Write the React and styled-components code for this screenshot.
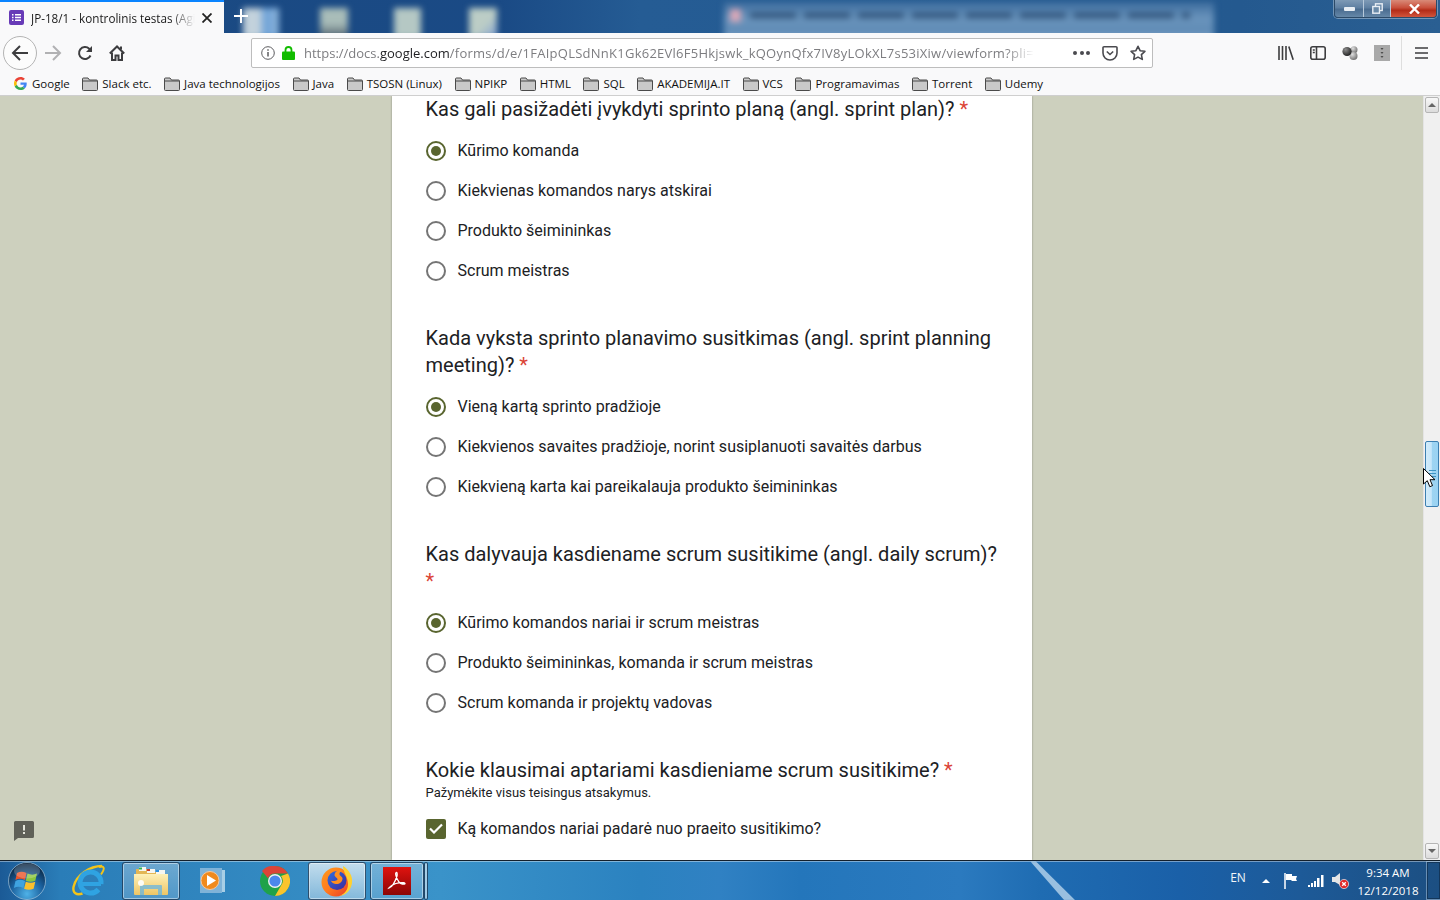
import React from "react";
import styled, { createGlobalStyle } from "styled-components";

const GlobalStyle = createGlobalStyle`
  html, body {
    margin: 0;
    padding: 0;
    height: 100%;
    overflow: hidden;
  }
  * {
    box-sizing: border-box;
  }
`;

const UI_FONT = `"Open Sans", "Noto Sans", sans-serif`;

const questions = [
  {
    title: "Kas gali pasižadėti įvykdyti sprinto planą (angl. sprint plan)?",
    options: ["Kūrimo komanda", "Kiekvienas komandos narys atskirai", "Produkto šeimininkas", "Scrum meistras"],
  },
  {
    title: "Kada vyksta sprinto planavimo susitkimas (angl. sprint planning meeting)?",
    options: [
      "Vieną kartą sprinto pradžioje",
      "Kiekvienos savaites pradžioje, norint susiplanuoti savaitės darbus",
      "Kiekvieną karta kai pareikalauja produkto šeimininkas",
    ],
  },
  {
    title: "Kas dalyvauja kasdiename scrum susitikime (angl. daily scrum)?",
    options: [
      "Kūrimo komandos nariai ir scrum meistras",
      "Produkto šeimininkas, komanda ir scrum meistras",
      "Scrum komanda ir projektų vadovas",
    ],
  },
];

const bookmarks = [
  "Slack etc.",
  "Java technologijos",
  "Java",
  "TSOSN (Linux)",
  "NPIKP",
  "HTML",
  "SQL",
  "AKADEMIJA.IT",
  "VCS",
  "Programavimas",
  "Torrent",
  "Udemy",
];

// ---- icons ----
const GoogleIcon = () => (
  <svg width="13" height="13" viewBox="0 0 48 48">
    <path fill="#EA4335" d="M24 9.5c3.5 0 6.7 1.2 9.2 3.6l6.9-6.9C35.9 2.4 30.5 0 24 0 14.6 0 6.5 5.4 2.6 13.2l8 6.2C12.5 13.6 17.8 9.5 24 9.5z" />
    <path fill="#4285F4" d="M46.9 24.5c0-1.6-.1-3.1-.4-4.5H24v9h12.9c-.6 3-2.2 5.5-4.8 7.2l7.7 6c4.5-4.2 7.1-10.3 7.1-17.7z" />
    <path fill="#FBBC05" d="M10.5 28.6c-.5-1.4-.8-3-.8-4.6s.3-3.2.8-4.6l-8-6.2C.9 16.5 0 20.1 0 24s.9 7.5 2.6 10.8l7.9-6.2z" />
    <path fill="#34A853" d="M24 48c6.5 0 11.9-2.1 15.9-5.8l-7.7-6c-2.2 1.5-4.9 2.3-8.2 2.3-6.2 0-11.5-4.1-13.4-9.9l-8 6.2C6.5 42.6 14.6 48 24 48z" />
  </svg>
);

const FolderIcon = () => (
  <svg width="16" height="14" viewBox="0 0 16 14">
    <path d="M.5 12.5V2A1 1 0 0 1 1.5 1H6l1.500 2h7a1 1 0 0 1 1 1v8.500a1 1 0 0 1-1 1h-13a1 1 0 0 1-1-1z" fill="#c9c9c9" stroke="#4a4a4a" />
    <path d="M1 4h14" stroke="#4a4a4a" />
  </svg>
);

const BackIcon = () => (
  <svg width="18" height="18" viewBox="0 0 18 18" fill="none" stroke="#3d3d3f" strokeWidth="2">
    <path d="M17 9H2M9 2 2 9l7 7" />
  </svg>
);

const ForwardIcon = () => (
  <svg width="18" height="18" viewBox="0 0 18 18" fill="none" stroke="#b1b1b3" strokeWidth="2">
    <path d="M1 9h15M9 2l7 7-7 7" />
  </svg>
);

const ReloadIcon = () => (
  <svg width="16" height="16" viewBox="0 0 16 16" fill="none" stroke="#3d3d3f" strokeWidth="2">
    <path d="M13.5 10.5A6 6 0 1 1 12.2 3.7L14.5 6" />
    <path d="M15 1v6H9" fill="#3d3d3f" stroke="none" />
  </svg>
);

const HomeIcon = () => (
  <svg width="16" height="16" viewBox="0 0 16 16" fill="none" stroke="#3d3d3f" strokeWidth="2">
    <path d="M.8 8.500 8 1.500l7.200 7" />
    <path d="M3 7.500V15h3.500v-4.500h3V15H13V7.500" />
    <path d="M12 1.500v3" />
  </svg>
);

const InfoIcon = () => (
  <svg width="14" height="14" viewBox="0 0 14 14" fill="none" stroke="#5c5c5f">
    <circle cx="7" cy="7" r="6.3" />
    <path d="M7 6v4.500M7 3.200v1.600" strokeWidth="1.5" />
  </svg>
);

const LockIcon = () => (
  <svg width="13" height="14" viewBox="0 0 13 14">
    <path d="M3.5 6V4a3 3 0 0 1 6 0v2" fill="none" stroke="#12bc00" strokeWidth="1.8" />
    <rect y="5.5" width="13" height="8.5" rx="1" fill="#12bc00" />
  </svg>
);

const PocketIcon = () => (
  <svg width="16" height="15" viewBox="0 0 16 15" fill="none" stroke="#4a4a4f" strokeWidth="1.6">
    <path d="M1 1.800A1 1 0 0 1 2 .8h12a1 1 0 0 1 1 1V7a7 7 0 0 1-14 0z" />
    <path d="m4.800 5.500 3.200 3 3.200-3" />
  </svg>
);

const StarIcon = () => (
  <svg width="16" height="16" viewBox="0 0 16 16" fill="none" stroke="#4a4a4f" strokeWidth="1.6" strokeLinejoin="round">
    <path d="m8 1.300 2.100 4.400 4.800.6-3.500 3.300.9 4.800L8 12.100l-4.300 2.300.9-4.800L1.100 6.300l4.800-.6z" />
  </svg>
);

const LibraryIcon = () => (
  <svg width="16" height="14" viewBox="0 0 16 14" fill="none" stroke="#3d3d3f" strokeWidth="1.6">
    <path d="M1 0v14M4.500 0v14M8 0v14M10.800.5l4.400 13.300" />
  </svg>
);

const SidebarIcon = () => (
  <svg width="16" height="14" viewBox="0 0 16 14" fill="none" stroke="#3d3d3f" strokeWidth="1.6">
    <rect x=".8" y=".8" width="14.4" height="12.4" rx="2" />
    <path d="M6.500 1v12M2.800 4h2M2.800 6.500h2" />
  </svg>
);

const BallsIcon = () => (
  <svg width="16" height="14" viewBox="0 0 16 14">
    <defs>
      <radialGradient id="ballDark" cx="35%" cy="30%" r="75%">
        <stop offset="0" stopColor="#8c8c8c" />
        <stop offset="1" stopColor="#1e1e1e" />
      </radialGradient>
      <radialGradient id="ballLight" cx="35%" cy="30%" r="75%">
        <stop offset="0" stopColor="#e0e0e0" />
        <stop offset="1" stopColor="#6e6e6e" />
      </radialGradient>
    </defs>
    <circle cx="12" cy="3.8" r="3.5" fill="url(#ballLight)" />
    <circle cx="11.5" cy="10" r="4" fill="url(#ballLight)" />
    <circle cx="5" cy="5.5" r="4.6" fill="url(#ballDark)" />
  </svg>
);

const ExtIcon = () => (
  <svg width="16" height="16" viewBox="0 0 16 16">
    <rect width="16" height="16" fill="#a9a9a9" />
    <path d="M6.500 3h3L8 5zM6.500 7h3L8 9zM6.500 11h3L8 13z" fill="#4d4d4d" />
  </svg>
);

const MenuIcon = () => (
  <svg width="13" height="12" viewBox="0 0 13 12" stroke="#3d3d3f" strokeWidth="1.7">
    <path d="M0 1h13M0 6h13M0 11h13" />
  </svg>
);

const FeedbackIcon = () => (
  <svg width="20" height="20" viewBox="0 0 20 20">
    <path d="M1.500 0h17A1.500 1.500 0 0 1 20 1.500v14a1.500 1.500 0 0 1-1.500 1.500H4l-4 3V1.500A1.500 1.500 0 0 1 1.500 0z" fill="#5f6058" />
    <path d="M9 4h2v5.500H9zM9 11h2v2H9z" fill="#e4e5dc" />
  </svg>
);

const OrbIcon = () => (
  <svg width="38" height="38" viewBox="0 0 38 38">
    <defs>
      <radialGradient id="orbBg" cx="50%" cy="85%" r="80%">
        <stop offset="0" stopColor="#4fb2e8" />
        <stop offset=".55" stopColor="#1a5f9c" />
        <stop offset="1" stopColor="#0a2540" />
      </radialGradient>
    </defs>
    <circle cx="19" cy="19" r="18.5" fill="url(#orbBg)" stroke="#b9d2e4" strokeOpacity=".6" />
    <path d="M9 11c3-1.700 6-1.700 9.500 0l-1.600 7c-3.500-1.600-6.300-1.600-9.500 0z" fill="#e8552b" />
    <path d="M19.500 11.500c3.200 1.500 6.300 1.500 9.500 0l-1.700 7.200c-3.200 1.300-6.300 1.300-9.500 0z" fill="#8cc63f" />
    <path d="M7.500 19c3.200-1.600 6-1.600 9.500 0l-1.600 7c-3.500-1.600-6.300-1.600-9.500 0z" fill="#3fa3e0" />
    <path d="M17.800 19.800c3.200 1.300 6.300 1.300 9.500 0l-1.700 7c-3.200 1.300-6.300 1.300-9.500 0z" fill="#fbc02d" />
    <ellipse cx="19" cy="9" rx="13" ry="7.5" fill="#fff" fillOpacity=".2" />
  </svg>
);

const IeIcon = () => (
  <svg width="36" height="36" viewBox="0 0 36 36" fill="none">
    <path d="M32 3C20 3 6 12 3.500 24c-1 6 3 8.500 9 6.500" stroke="#f3c419" strokeWidth="2.4" />
    <path d="M29 4c4-1.500 5.500.500 4.500 3-.5 1.500-1.500 3-2.500 4.500" stroke="#f3c419" strokeWidth="2" />
    <path d="M31 21H11" stroke="#2fa3e2" strokeWidth="4" />
    <path d="M28.500 26.500A10.500 10.500 0 1 1 31 21" stroke="#2fa3e2" strokeWidth="5" />
  </svg>
);

const ExplorerIcon = () => (
  <svg width="34" height="30" viewBox="0 0 34 30">
    <defs>
      <linearGradient id="folderFace" x1="0" y1="0" x2="0" y2="1">
        <stop offset="0" stopColor="#fdf0b8" />
        <stop offset="1" stopColor="#eec565" />
      </linearGradient>
    </defs>
    <path d="M2 3h12l2 3h15v8H2z" fill="#e3b655" />
    <path d="M5 1h7v4H5z" fill="#f6f6f0" />
    <rect x="5" y="1.5" width="3" height="2" fill="#2fb24a" />
    <path d="M13 3h8v4h-8z" fill="#f6f6f0" />
    <rect x="13" y="3" width="3" height="2" fill="#c93a2c" />
    <path d="M22 4h9v4h-9z" fill="#f6f6f0" />
    <rect x="22" y="4" width="3" height="2" fill="#2d8fe0" />
    <path d="M0 8h34v20a1 1 0 0 1-1 1H1a1 1 0 0 1-1-1z" fill="url(#folderFace)" />
    <path d="M6 29v-9a1 1 0 0 1 1-1h20a1 1 0 0 1 1 1v9h-4v-6H10v6z" fill="#6fb6dc" fillOpacity=".8" />
    <circle cx="7" cy="17" r="3" fill="#fff" fillOpacity=".9" />
  </svg>
);

const MediaIcon = () => (
  <svg width="30" height="28" viewBox="0 0 30 28">
    <rect x="9" y="3" width="20" height="22" fill="#a8cfe6" />
    <rect x="4" y="1" width="22" height="25" fill="#7fb3d8" />
    <circle cx="14" cy="13.5" r="9" fill="#f08a1d" stroke="#f7c79a" />
    <path d="m11 8 9 5.500-9 5.500z" fill="#fff" />
  </svg>
);

const ChromeIcon = () => (
  <svg width="30" height="30" viewBox="0 0 30 30">
    <circle cx="15" cy="15" r="15" fill="#1fa24a" />
    <path d="M15 0a15 15 0 0 1 13 7.500H15a7.500 7.500 0 0 0-7 4.800L2 4.900A15 15 0 0 1 15 0z" fill="#dc4437" />
    <path d="M28 7.500A15 15 0 0 1 15 30l6.500-11.200A7.500 7.500 0 0 0 21 10z" fill="#fbc42d" />
    <circle cx="15" cy="15" r="7" fill="#f1f1f1" />
    <circle cx="15" cy="15" r="5.6" fill="#4b87ec" />
  </svg>
);

const FirefoxIcon = () => (
  <svg width="32" height="32" viewBox="0 0 32 32">
    <defs>
      <linearGradient id="foxBody" x1="0" y1="0" x2="1" y2="1">
        <stop offset="0" stopColor="#ff9a1e" />
        <stop offset=".5" stopColor="#ff7a1e" />
        <stop offset="1" stopColor="#e7352a" />
      </linearGradient>
      <linearGradient id="foxGlobe" x1="0" y1="0" x2="1" y2="1">
        <stop offset="0" stopColor="#2f6fe0" />
        <stop offset="1" stopColor="#3d2a9a" />
      </linearGradient>
    </defs>
    <circle cx="15" cy="17" r="14.5" fill="url(#foxBody)" />
    <circle cx="16" cy="15.5" r="9.5" fill="url(#foxGlobe)" />
    <path d="M22 1c6 4 10 10 9 17-1 7-6 12.500-13 13 5.500-2 9-6 9-12 0-7-5-12-5-18z" fill="#ffd02f" />
    <path d="M16 6c2-1.500 5-1.500 6 .5-2-.5-3.500.5-3.500 2.500s3 2.500 3 4.500c0 3.500-3.500 6-7 5.500-2.500-.5-4-2-5-3.500 3 1 6 .5 7-1 .5-1.500-3-2.500-3-4.500 0-1.500 1-3 2.500-4z" fill="#ff8f1f" />
  </svg>
);

const AcrobatIcon = () => (
  <svg width="28" height="28" viewBox="0 0 28 28">
    <defs>
      <linearGradient id="pdfBg" x1="0" y1="0" x2="0" y2="1">
        <stop offset="0" stopColor="#e0130f" />
        <stop offset="1" stopColor="#8c0606" />
      </linearGradient>
    </defs>
    <rect width="28" height="28" fill="url(#pdfBg)" />
    <path d="M6 21c3-1 6-6 8-12 .5-2 0-4-.8-3.500C12 6 13 11 16 15c2 2.500 5 2.500 6 1.800.5-1-2-1.500-6-1s-8 2.500-10 5.200z" fill="none" stroke="#fff" strokeWidth="1.3" />
  </svg>
);

const TrayFlag = () => (
  <svg width="16" height="16" viewBox="0 0 16 16">
    <path d="M2 0v16" stroke="#fff" strokeWidth="1.5" />
    <path d="M3 1h6v2h5l-1 3 1 2H9L8 7H3z" fill="#fff" />
  </svg>
);

const TraySignal = () => (
  <svg width="16" height="12" viewBox="0 0 16 12" fill="#fff">
    <rect x="0" y="10" width="2" height="2" />
    <rect x="3" y="8" width="2" height="4" />
    <rect x="6" y="6" width="2" height="6" />
    <rect x="9" y="3" width="2.5" height="9" />
    <rect x="13" y="0" width="2.5" height="12" />
  </svg>
);

const TrayVolume = () => (
  <svg width="17" height="17" viewBox="0 0 17 17">
    <path d="M0 5h3l5-4v12L3 10H0z" fill="#e6e6e6" />
    <circle cx="12" cy="12" r="4.6" fill="#e02a2a" stroke="#fff" strokeWidth=".6" />
    <path d="m10.200 10.200 3.600 3.600m0-3.600-3.600 3.600" stroke="#fff" strokeWidth="1.3" />
  </svg>
);

const CursorIcon = () => (
  <svg width="13" height="20" viewBox="0 0 13 20">
    <path d="M.5.5v15.500l3.800-3.300 2.500 6 2.700-1.100-2.500-5.900h5z" fill="#fff" stroke="#000" />
  </svg>
);

// ---- window frame ----
const Screen = styled.div`
  width: 1440px;
  height: 900px;
  display: flex;
  flex-direction: column;
  overflow: hidden;
  font-family: ${UI_FONT};
`;

const TabStrip = styled.div`
  position: relative;
  flex: 0 0 33px;
  display: flex;
  align-items: stretch;
  overflow: hidden;
  background: linear-gradient(90deg, #1b4a82 0, #1a4a85 500px, #255c94 640px, #24598f 1240px, #2a5f92 1440px);
`;

const BlurLayer = styled.div`
  position: absolute;
  inset: 0;
  filter: blur(3px);
`;

const BlurTile = styled.i`
  position: absolute;
  top: 8px;
  left: ${(p) => p.$x}px;
  width: ${(p) => p.$w}px;
  height: 30px;
  background: ${(p) => p.$bg};
`;

const BlurWindow = styled.i`
  position: absolute;
  left: 724px;
  top: 2px;
  width: 490px;
  height: 40px;
  background: linear-gradient(180deg, #3c6c9d 0, #6a94bc 40%, #5f8bb5 75%, #9ab8d4 100%);
`;

const BlurTitle = styled.i`
  position: absolute;
  left: 750px;
  top: 13px;
  width: 440px;
  height: 5px;
  background: repeating-linear-gradient(90deg, #2c4f76 0 46px, #5f8bb5 46px 54px);
`;

const BlurDot = styled.i`
  position: absolute;
  left: 730px;
  top: 9px;
  width: 11px;
  height: 13px;
  background: #d9a8b8;
`;

const Tab = styled.div`
  position: relative;
  flex: 0 0 224px;
  min-width: 0;
  display: flex;
  align-items: center;
  gap: 7px;
  padding: 0 9px;
  background: #f9f9fa;
  border-top: 2px solid #0a84ff;
`;

const Favicon = styled.span`
  flex: 0 0 15px;
  height: 15px;
  border-radius: 2px;
  background: #673ab7;
  display: flex;
  align-items: center;
  justify-content: center;
`;

const TabTitle = styled.span`
  flex: 1;
  min-width: 0;
  overflow: hidden;
  white-space: nowrap;
  font-size: 11.7px;
  color: #1a1a1a;
  -webkit-mask-image: linear-gradient(90deg, #000 85%, transparent);
  mask-image: linear-gradient(90deg, #000 85%, transparent);
`;

const TabClose = styled.svg`
  flex: 0 0 10px;
  margin: 0 3px 0 0;
`;

const NewTab = styled.svg`
  position: relative;
  margin: 9px 0 0 10px;
`;

const WindowControls = styled.div`
  position: absolute;
  top: 0;
  right: 3px;
  width: 103px;
  height: 18px;
  display: flex;
  border: 1px solid #2c4a68;
  border-top: 0;
  border-radius: 0 0 4px 4px;
  overflow: hidden;
  box-shadow: 0 0 0 1px rgba(255, 255, 255, 0.35);
`;

const WinButton = styled.div`
  flex: ${(p) => p.$w}px 0 0;
  display: flex;
  align-items: center;
  justify-content: center;
  background: ${(p) =>
    p.$close
      ? "linear-gradient(180deg, #d98a78 0, #c9503c 45%, #b32c18 60%, #d2553c 100%)"
      : "linear-gradient(180deg, #7e9ab6 0, #5f80a2 45%, #4a6c90 55%, #6688a8 100%)"};
  border-right: ${(p) => (p.$close ? "0" : "1px solid #b6c8da")};
`;

const NavBar = styled.div`
  position: relative;
  flex: 0 0 37px;
  display: flex;
  align-items: center;
  background: #f9f9fa;
  padding-top: 3px;
`;

const BackButton = styled.div`
  flex: 0 0 34px;
  height: 34px;
  margin-left: 3px;
  border-radius: 50%;
  border: 1px solid #b4b4b4;
  background: #fcfcfc;
  display: flex;
  align-items: center;
  justify-content: center;
`;

const NavSlot = styled.div`
  flex: 0 0 32px;
  height: 32px;
  display: flex;
  align-items: center;
  justify-content: center;
`;

const NavSlots = styled.div`
  display: flex;
`;

const UrlBar = styled.div`
  width: 902px;
  height: 30px;
  margin-left: 118px;
  display: flex;
  align-items: center;
  background: #fff;
  border: 1px solid #bdbdbd;
  border-radius: 2px;
  padding: 0 6px 0 9px;
`;

const UrlIcons = styled.div`
  display: flex;
  align-items: center;
  gap: 7px;
  width: 43px;
`;

const UrlText = styled.div`
  width: 730px;
  overflow: hidden;
  white-space: nowrap;
  font-family: "Open Sans", sans-serif;
  font-size: 13px;
  color: #7d7d80;
  -webkit-mask-image: linear-gradient(90deg, #000 96%, transparent);
  mask-image: linear-gradient(90deg, #000 96%, transparent);

  b {
    font-weight: 400;
    color: #1f1f22;
  }

  em {
    font-style: normal;
    letter-spacing: 0.25px;
  }
`;

const UrlActions = styled.div`
  flex: 1;
  display: flex;
  align-items: center;
  justify-content: flex-end;
  gap: 12px;
`;

const Dots = styled.span`
  display: flex;
  gap: 2.5px;

  i {
    width: 4px;
    height: 4px;
    border-radius: 50%;
    background: #4a4a4f;
  }
`;

const ToolGroup = styled.div`
  display: flex;
  align-items: center;
  margin-left: 117px;
`;

const ToolSlot = styled.div`
  flex: 0 0 32px;
  height: 32px;
  margin-left: ${(p) => p.$ml || 0}px;
  display: flex;
  align-items: center;
  justify-content: center;
`;

const ToolDivider = styled.div`
  width: 1px;
  height: 34px;
  margin-left: 3px;
  background: #dedede;
`;

const BookmarkBar = styled.div`
  flex: 0 0 26px;
  display: flex;
  align-items: center;
  gap: 12.5px;
  padding: 3px 0 1px 14px;
  background: #f9f9fa;
  border-bottom: 1px solid #cfcfcf;
`;

const Bookmark = styled.span`
  display: flex;
  align-items: center;
  gap: ${(p) => (p.$google ? 5 : 4)}px;
  font-size: 11.5px;
  color: #111;
  white-space: nowrap;
`;

// ---- page ----
const Content = styled.div`
  flex: 1;
  min-height: 0;
  display: flex;
`;

const Page = styled.main`
  position: relative;
  flex: 1;
  min-width: 0;
  overflow: hidden;
  background: #cdd0be;
  padding-left: 391.5px;
`;

const Card = styled.section`
  width: 640px;
  min-height: 100%;
  padding: 0 34px;
  background: #fff;
  box-shadow: 0 0 2px rgba(0, 0, 0, 0.35);
  font-family: Roboto, sans-serif;
`;

const Question = styled.div`
  margin-bottom: 34.5px;
`;

const QuestionTitle = styled.div`
  font-size: 20px;
  line-height: 27px;
  color: #202124;
  margin-bottom: ${(p) => (p.$hint ? 1 : 7.5)}px;

  span {
    color: #db4437;
  }
`;

const Hint = styled.div`
  font-size: 13px;
  line-height: 16px;
  color: #202124;
  margin-bottom: 7.5px;
`;

const OptionRow = styled.div`
  height: 40px;
  display: flex;
  align-items: center;
  gap: 12px;
  font-size: 16px;
  color: #202124;
`;

const Radio = styled.span`
  flex: 0 0 20px;
  height: 20px;
  border-radius: 50%;
  border: 2px solid ${(p) => (p.$checked ? "#59652f" : "#757575")};
  display: flex;
  align-items: center;
  justify-content: center;

  &::after {
    content: "";
    width: 10px;
    height: 10px;
    border-radius: 50%;
    background: ${(p) => (p.$checked ? "#59652f" : "transparent")};
  }
`;

const CheckBox = styled.span`
  flex: 0 0 20px;
  height: 20px;
  border-radius: 2px;
  background: #59652f;
  display: flex;
  align-items: center;
  justify-content: center;
`;

const FeedbackButton = styled.div`
  position: absolute;
  left: 14px;
  bottom: 19px;
  height: 20px;
`;

const ScrollBar = styled.div`
  position: relative;
  flex: 0 0 17px;
  display: flex;
  flex-direction: column;
  padding: 1px;
  background: #f0f0f0;
  border-left: 1px solid #e4e4e4;
`;

const ScrollButton = styled.div`
  flex: 0 0 16px;
  display: flex;
  align-items: center;
  justify-content: center;
  background: linear-gradient(180deg, #f8f8f8, #dcdcdc);
  border: 1px solid #b5b5b5;
  border-radius: 2px;
`;

const ScrollTrack = styled.div`
  flex: 1;
  min-height: 0;
  padding-top: 328px;
`;

const ScrollThumb = styled.div`
  height: 66px;
  display: flex;
  align-items: center;
  justify-content: center;
  background: linear-gradient(90deg, #d2ecfb 0, #c6e6fa 45%, #9dd4f2 50%, #9ad3f3 100%);
  border: 1px solid #3c7fb1;
  border-radius: 2px;
`;

const Grip = styled.i`
  width: 7px;
  height: 8px;
  background: repeating-linear-gradient(180deg, #3f95c4 0 1px, transparent 1px 3px);
`;

const Cursor = styled.div`
  position: absolute;
  top: 372px;
  left: -1px;
  height: 20px;
`;

// ---- taskbar ----
const Taskbar = styled.footer`
  position: relative;
  flex: 0 0 40px;
  display: flex;
  align-items: center;
  overflow: hidden;
  border-top: 1px solid #14202c;
  box-shadow: inset 0 1px 0 rgba(255, 255, 255, 0.4);
  background: linear-gradient(
    90deg,
    #1b5a96 0,
    #2a7db8 60px,
    #3a93c9 440px,
    #2b82c0 640px,
    #3081c3 720px,
    #2476bb 800px,
    #2b7abf 960px,
    #1f6cb2 1040px,
    #1a60a8 1180px,
    #1d5a98 1300px,
    #1c4f82 1440px
  );

  &::before {
    content: "";
    position: absolute;
    left: 1030px;
    top: 0;
    width: 46px;
    height: 40px;
    background: rgba(195, 220, 240, 0.75);
    clip-path: polygon(0 0, 12% 0, 100% 100%, 76% 100%);
    filter: blur(1px);
  }
`;

const TaskSlot = styled.div`
  position: relative;
  flex: 0 0 ${(p) => p.$w}px;
  height: 38px;
  margin-left: ${(p) => p.$ml || 0}px;
  display: flex;
  align-items: center;
  justify-content: center;
  ${(p) =>
    p.$active &&
    `
    border: 1px solid rgba(20, 50, 80, .8);
    border-radius: 3px;
    box-shadow: inset 0 0 0 1px rgba(255, 255, 255, .45);
    background: linear-gradient(180deg, rgba(255, 255, 255, ${p.$active}) 0, rgba(255, 255, 255, ${p.$active * 0.55}) 100%);
  `}
`;

const Tray = styled.div`
  position: relative;
  margin-left: auto;
  display: flex;
  align-items: center;
  height: 100%;
  color: #fff;
`;

const TrayItem = styled.div`
  flex: 0 0 ${(p) => p.$w}px;
  display: flex;
  align-items: center;
  justify-content: center;
  margin-bottom: ${(p) => p.$mb || 0}px;
  font-size: 12px;
  color: #f2f6fa;
`;

const Clock = styled.div`
  width: 72px;
  padding-top: 2px;
  text-align: center;
  font-size: 11.5px;
  line-height: 18px;
  color: #fff;
`;

const ShowDesktop = styled.div`
  flex: 0 0 14px;
  margin-left: 2px;
  height: 100%;
  border: 1px solid rgba(200, 220, 240, 0.45);
  border-right: 0;
  box-shadow: inset 0 0 0 1px rgba(10, 30, 50, 0.5);
`;

const Arrow = styled.i`
  width: 0;
  height: 0;
  border-left: 4px solid transparent;
  border-right: 4px solid transparent;
  ${(p) => (p.$down ? "border-top" : "border-bottom")}: 4px solid ${(p) => p.$color};
`;

const QuestionBlock = ({ q }) => (
  <Question>
    <QuestionTitle>
      {q.title} <span>*</span>
    </QuestionTitle>
    {q.options.map((o, i) => (
      <OptionRow key={o}>
        <Radio $checked={i === 0} />
        {o}
      </OptionRow>
    ))}
  </Question>
);

export default function App() {
  return (
    <Screen>
      <GlobalStyle />
      <TabStrip>
        <BlurLayer>
          <BlurTile $x={243} $w={36} $bg="linear-gradient(90deg,#c3d2dc 0,#c3d2dc 45%,#6ea2d8 60%,#8bb3d8 100%)" />
          <BlurTile $x={320} $w={28} $bg="linear-gradient(180deg,#a9bdb9 0,#a9bdb9 50%,#4f5f6c 100%)" />
          <BlurTile $x={394} $w={27} $bg="#b5c8c4" />
          <BlurTile $x={469} $w={28} $bg="linear-gradient(135deg,#bccdc6 0,#bccdc6 55%,#7f9ed0 100%)" />
          <BlurWindow />
          <BlurDot />
          <BlurTitle />
        </BlurLayer>
        <Tab>
          <Favicon>
            <svg width="9" height="7" viewBox="0 0 9 7" fill="#fff">
              <path d="M0 0h1.500v1.500H0zM3 0h6v1.500H3zM0 2.750h1.500v1.500H0zM3 2.750h6v1.500H3zM0 5.500h1.500V7H0zM3 5.500h6V7H3z" />
            </svg>
          </Favicon>
          <TabTitle>JP-18/1 - kontrolinis testas (Agile)</TabTitle>
          <TabClose width="10" height="10" viewBox="0 0 10 10" stroke="#222" strokeWidth="1.8">
            <path d="m.5.5 9 9m0-9-9 9" />
          </TabClose>
        </Tab>
        <NewTab width="14" height="14" viewBox="0 0 14 14" stroke="#fff" strokeWidth="2">
          <path d="M7 0v14M0 7h14" />
        </NewTab>
        <WindowControls>
          <WinButton $w={29}>
            <svg width="11" height="4"><rect width="11" height="4" rx="1" fill="#e8eef4" /></svg>
          </WinButton>
          <WinButton $w={27}>
            <svg width="11" height="11" viewBox="0 0 11 11" fill="none" stroke="#e8eef4" strokeWidth="1.4">
              <rect x="3.5" y=".8" width="6.7" height="6.7" />
              <rect x=".8" y="3.5" width="6.7" height="6.7" fill="#6a8aa8" />
            </svg>
          </WinButton>
          <WinButton $w={47} $close>
            <svg width="11" height="10" viewBox="0 0 11 10" stroke="#fff" strokeWidth="2.4">
              <path d="m1 .5 9 9m0-9-9 9" />
            </svg>
          </WinButton>
        </WindowControls>
      </TabStrip>

      <NavBar>
        <BackButton>
          <BackIcon />
        </BackButton>
        <NavSlots>
          <NavSlot><ForwardIcon /></NavSlot>
          <NavSlot><ReloadIcon /></NavSlot>
          <NavSlot><HomeIcon /></NavSlot>
        </NavSlots>
        <UrlBar>
          <UrlIcons>
            <InfoIcon />
            <LockIcon />
          </UrlIcons>
          <UrlText>
            https://docs.<b>google.com</b>
            <em>/forms/d/e/1FAIpQLSdNnK1Gk62EVl6F5Hkjswk_kQOynQfx7IV8yLOkXL7s53iXiw/viewform?pli=1</em>
          </UrlText>
          <UrlActions>
            <Dots><i /><i /><i /></Dots>
            <PocketIcon />
            <StarIcon />
          </UrlActions>
        </UrlBar>
        <ToolGroup>
          <ToolSlot><LibraryIcon /></ToolSlot>
          <ToolSlot><SidebarIcon /></ToolSlot>
          <ToolSlot><BallsIcon /></ToolSlot>
          <ToolSlot><ExtIcon /></ToolSlot>
          <ToolDivider />
          <ToolSlot $ml={3}><MenuIcon /></ToolSlot>
        </ToolGroup>
      </NavBar>

      <BookmarkBar>
        <Bookmark $google>
          <GoogleIcon />
          Google
        </Bookmark>
        {bookmarks.map((b) => (
          <Bookmark key={b}>
            <FolderIcon />
            {b}
          </Bookmark>
        ))}
      </BookmarkBar>

      <Content>
        <Page>
          <Card>
            {questions.map((q) => (
              <QuestionBlock key={q.title} q={q} />
            ))}
            <Question>
              <QuestionTitle $hint>
                Kokie klausimai aptariami kasdieniame scrum susitikime? <span>*</span>
              </QuestionTitle>
              <Hint>Pažymėkite visus teisingus atsakymus.</Hint>
              <OptionRow>
                <CheckBox>
                  <svg width="14" height="11" viewBox="0 0 14 11" fill="none" stroke="#fff" strokeWidth="2.2">
                    <path d="m1 5.500 4 4 8-8" />
                  </svg>
                </CheckBox>
                Ką komandos nariai padarė nuo praeito susitikimo?
              </OptionRow>
            </Question>
          </Card>
          <FeedbackButton>
            <FeedbackIcon />
          </FeedbackButton>
        </Page>
        <ScrollBar>
          <ScrollButton><Arrow $color="#666" /></ScrollButton>
          <ScrollTrack>
            <ScrollThumb><Grip /></ScrollThumb>
          </ScrollTrack>
          <ScrollButton><Arrow $down $color="#666" /></ScrollButton>
          <Cursor><CursorIcon /></Cursor>
        </ScrollBar>
      </Content>

      <Taskbar>
        <TaskSlot $w={54}><OrbIcon /></TaskSlot>
        <TaskSlot $w={68}><IeIcon /></TaskSlot>
        <TaskSlot $w={58} $active={0.3}><ExplorerIcon /></TaskSlot>
        <TaskSlot $w={61}><MediaIcon /></TaskSlot>
        <TaskSlot $w={67}><ChromeIcon /></TaskSlot>
        <TaskSlot $w={58} $active={0.7}><FirefoxIcon /></TaskSlot>
        <TaskSlot $w={54} $ml={4} $active={0.3}><AcrobatIcon /></TaskSlot>
        <TaskSlot $w={4} $active={0.2} />
        <Tray>
          <TrayItem $w={28} $mb={6}>EN</TrayItem>
          <TrayItem $w={27}><Arrow $color="#fff" /></TrayItem>
          <TrayItem $w={24}><TrayFlag /></TrayItem>
          <TrayItem $w={25}><TraySignal /></TrayItem>
          <TrayItem $w={24}><TrayVolume /></TrayItem>
          <Clock>
            <div>9:34 AM</div>
            <div>12/12/2018</div>
          </Clock>
          <ShowDesktop />
        </Tray>
      </Taskbar>
    </Screen>
  );
}
